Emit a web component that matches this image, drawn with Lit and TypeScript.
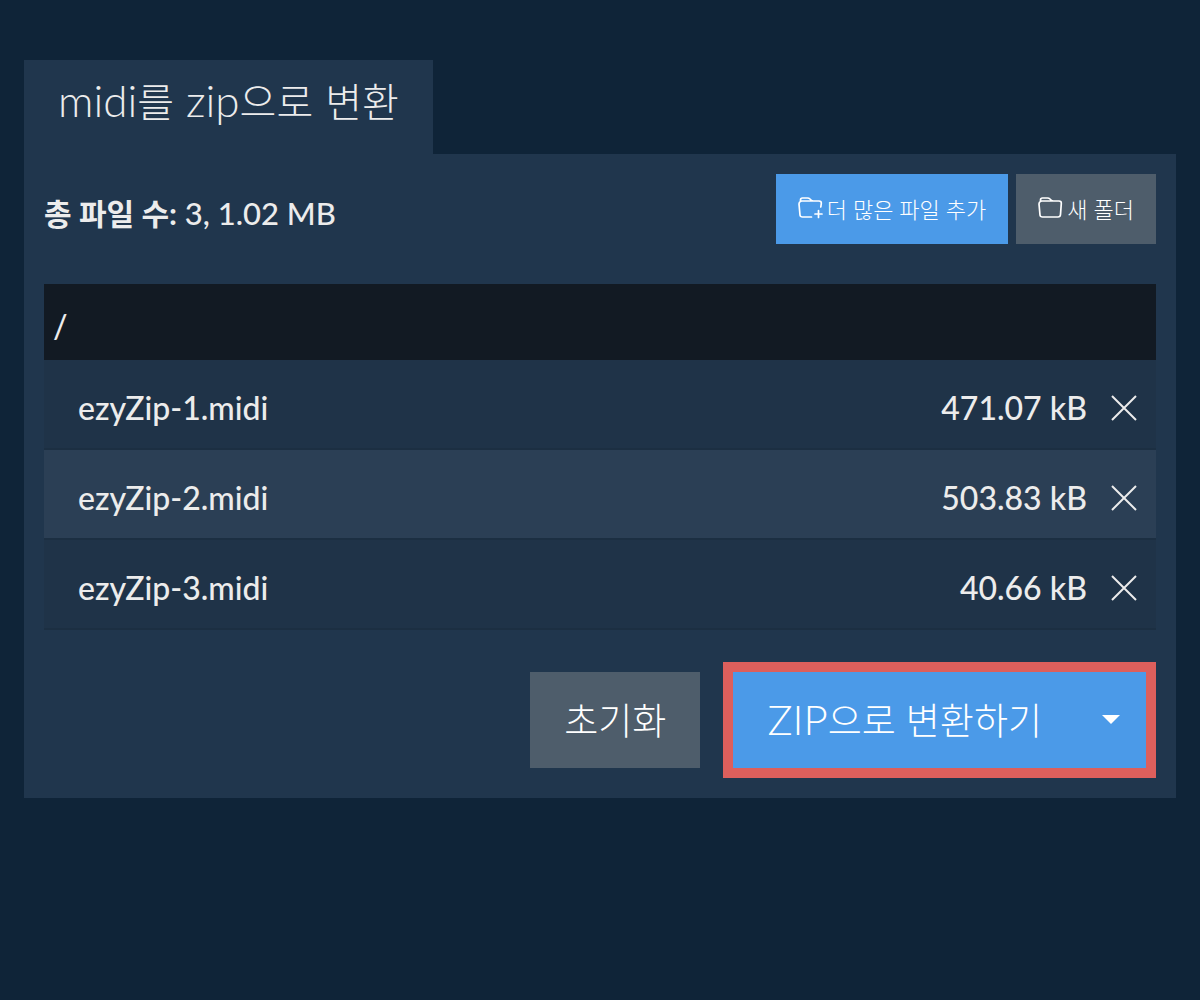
import { LitElement, html, css, svg } from "lit";
import { customElement, property, state } from "lit/decorators.js";

interface FileEntry {
  name: string;
  size: string;
}

const folderPath = svg`<path d="M2 18 L1 7 Q1 5 2.5 4.5 V3 Q2.5 1 4.5 1 H9.5 Q11 1 12 2 L13 3 Q14 4 15.5 4 H21 Q23.5 4 23.3 6.5 L22.5 17.5 Q22.3 20 20 20 H4.5 Q2.2 20 2 18 Z M2.5 4.5 Q3 4 4 4 H15.5" />`;
const folderPlusPath = svg`<path d="M13.5 20 H4.5 Q2.2 20 2 18 L1 7 Q1 5 2.5 4.5 V3 Q2.5 1 4.5 1 H9.5 Q11 1 12 2 L13 3 Q14 4 15.5 4 H21 Q23.5 4 23.3 6.5 L22.8 10 M2.5 4.5 Q3 4 4 4 H15.5 M20.5 13.5 V20.5 M17 17 H24" />`;

@customElement("file-table")
export class FileTable extends LitElement {
  @property({ attribute: false }) files: FileEntry[] = [];

  static styles = css`
    :host {
      display: block;
    }
    .table {
      width: 100%;
      border-collapse: separate;
      border-spacing: 0;
      font-size: 32px;
      line-height: 40px;
      font-weight: 500;
    }
    .path {
      height: 76px;
      box-sizing: border-box;
      padding: 8px 9px 0;
      background: #121a23;
      text-align: left;
      font-weight: 500;
    }
    .cell {
      height: 90px;
      box-sizing: border-box;
      padding: 8px 0 0;
      background: #1f3348;
      border-bottom: 2px solid #1c2f42;
    }
    .row:nth-child(even) .cell {
      background: #2b3f55;
    }
    .name {
      padding-left: 34px;
      text-align: left;
      font-weight: inherit;
    }
    .size {
      text-align: right;
    }
    .action {
      width: 69px;
      padding: 8px 0 0 4px;
      text-align: center;
    }
    .remove {
      display: inline-flex;
      padding: 7px;
      border: 0;
      background: none;
      color: inherit;
      cursor: pointer;
      vertical-align: top;
    }
    .cross {
      width: 26px;
      height: 26px;
      fill: none;
      stroke: currentColor;
      stroke-width: 2;
    }
  `;

  private remove(file: FileEntry) {
    this.dispatchEvent(new CustomEvent("remove-file", { detail: file }));
  }

  render() {
    return html`
      <table class="table">
        <thead>
          <tr>
            <th class="path" colspan="3" scope="colgroup">/</th>
          </tr>
        </thead>
        <tbody>
          ${this.files.map(
            (file) => html`
              <tr class="row">
                <th class="cell name" scope="row">${file.name}</th>
                <td class="cell size">${file.size}</td>
                <td class="cell action">
                  <button class="remove" type="button" aria-label="${file.name} 삭제" @click=${() => this.remove(file)}>
                    <svg class="cross" viewBox="0 0 26 26" aria-hidden="true"><path d="M1 1 L25 25 M25 1 L1 25" /></svg>
                  </button>
                </td>
              </tr>
            `
          )}
        </tbody>
      </table>
    `;
  }
}

@customElement("app-root")
export class AppRoot extends LitElement {
  @state() private files: FileEntry[] = [
    { name: "ezyZip-1.midi", size: "471.07 kB" },
    { name: "ezyZip-2.midi", size: "503.83 kB" },
    { name: "ezyZip-3.midi", size: "40.66 kB" },
  ];

  static styles = css`
    :host {
      display: block;
      box-sizing: border-box;
      min-height: 100vh;
      padding: 60px 24px;
      background: #0f2438;
      color: #ececec;
      font-family: Lato, "Noto Sans CJK KR", sans-serif;
    }
    .tab {
      width: fit-content;
      box-sizing: border-box;
      height: 94px;
      margin: 0;
      padding: 12px 34px 0;
      background: #20364d;
      font-size: 44px;
      line-height: 56px;
      font-weight: 300;
    }
    .tab .ko {
      font-size: 40px;
    }
    .panel {
      padding: 20px;
      background: #20364d;
    }
    .toolbar {
      display: flex;
      align-items: center;
      justify-content: space-between;
      margin-bottom: 40px;
    }
    .summary {
      margin: 0;
      padding-top: 8px;
      font-size: 31px;
      line-height: 40px;
      font-weight: 500;
    }
    .summary .ko {
      font-size: 30px;
    }
    .group {
      display: flex;
      gap: 8px;
    }
    .button {
      display: flex;
      align-items: center;
      justify-content: center;
      border: 0;
      background: #4e5d6b;
      color: #fff;
      font-family: inherit;
      font-weight: 300;
      cursor: pointer;
      white-space: nowrap;
    }
    .primary {
      background: #4b9ae8;
    }
    .small {
      height: 70px;
      gap: 3px;
      padding: 0 22px 2px;
      font-size: 22px;
    }
    .large {
      height: 96px;
      padding: 0 34px 2px;
      font-size: 42px;
    }
    .large .ko {
      font-size: 37px;
    }
    .icon {
      width: 26px;
      height: 22px;
      fill: none;
      stroke: currentColor;
      stroke-width: 1.7;
      stroke-linecap: round;
      stroke-linejoin: round;
    }
    .footer {
      display: flex;
      align-items: center;
      justify-content: flex-end;
      gap: 23px;
      margin-top: 32px;
    }
    .split {
      display: flex;
      border: 10px solid #dd5f5c;
    }
    .toggle {
      width: 70px;
      height: 96px;
      padding: 0 0 2px;
    }
    .caret {
      width: 18px;
      height: 9px;
      fill: currentColor;
    }
  `;

  private removeFile(event: CustomEvent<FileEntry>) {
    this.files = this.files.filter((file) => file !== event.detail);
  }

  render() {
    return html`
      <h1 class="tab">midi<span class="ko">를</span> zip<span class="ko">으로</span> <span class="ko">변환</span></h1>
      <main class="panel">
        <div class="toolbar">
          <p class="summary"><strong><span class="ko">총 파일 수</span>:</strong> 3, 1.02 MB</p>
          <div class="group">
            <button class="button primary small" type="button">
              <svg class="icon" viewBox="0 0 26 22" aria-hidden="true">${folderPlusPath}</svg>
              <span>더 많은 파일 추가</span>
            </button>
            <button class="button small" type="button">
              <svg class="icon" viewBox="0 0 26 22" aria-hidden="true">${folderPath}</svg>
              <span>새 폴더</span>
            </button>
          </div>
        </div>
        <file-table .files=${this.files} @remove-file=${this.removeFile}></file-table>
        <div class="footer">
          <button class="button large" type="button"><span class="ko">초기화</span></button>
          <div class="split">
            <button class="button primary large" type="button">
              <span>ZIP<span class="ko">으로 변환하기</span></span>
            </button>
            <button class="button primary toggle" type="button" aria-label="다른 형식">
              <svg class="caret" viewBox="0 0 18 9" aria-hidden="true"><path d="M0 0 H18 L9 9 Z" /></svg>
            </button>
          </div>
        </div>
      </main>
    `;
  }
}
